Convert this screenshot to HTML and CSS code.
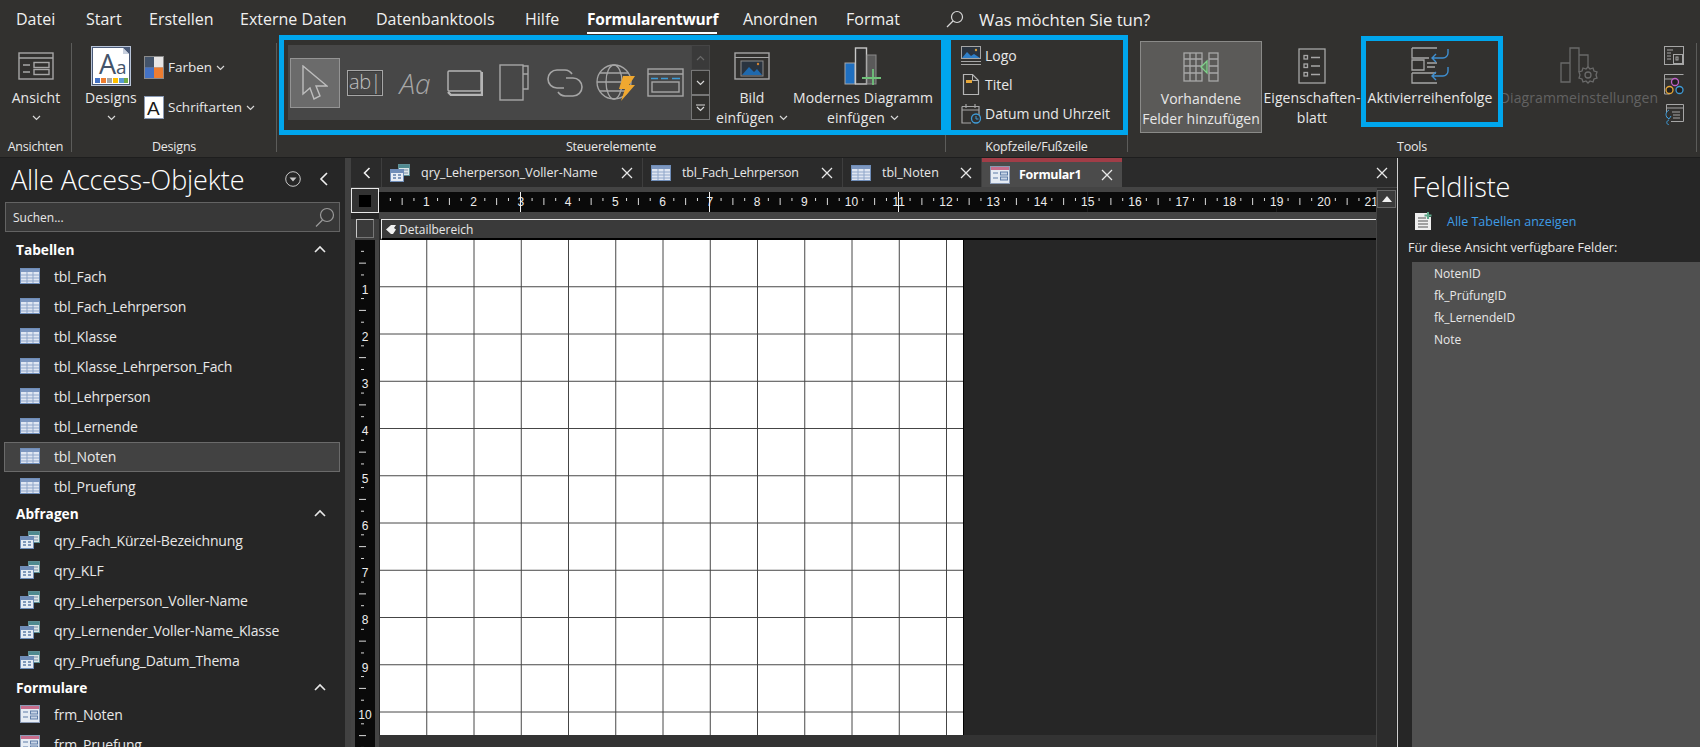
FILE: index.html
```html
<!DOCTYPE html>
<html lang="de">
  <head>
    <meta charset="utf-8" />
    <title>Formular1 - Formularentwurf</title>
    <link rel="stylesheet" href="styles.css">
  </head>
  <body>
    <svg class="sprite" aria-hidden="true">
      <symbol id="chev" viewBox="0 0 9 6"><path d="M1 1l3.500 3.500L8 1" fill="none" stroke="#d8d8d8" stroke-width="1.200"/></symbol>
      <symbol id="close" viewBox="0 0 12 12"><path d="M1 1l10 10M11 1L1 11" stroke="#e8e8e8" stroke-width="1.300"/></symbol>
      <symbol id="up" viewBox="0 0 12 8"><path d="M1 7l5-5 5 5" fill="none" stroke="#e8e8e8" stroke-width="1.600"/></symbol>
      <symbol id="tbl" viewBox="0 0 20 16">
        <rect x=".5" y=".5" width="19" height="15" fill="#dfe6f2" stroke="#6f8db8"/>
        <rect x="1" y="1" width="18" height="3" fill="#7d97c0"/>
        <path d="M1 7h18M1 10h18M1 13h18M7 4v11M13 4v11" stroke="#8fa6c9"/>
      </symbol>
      <symbol id="qry" viewBox="0 0 20 18">
        <rect x="8.500" y=".5" width="11" height="11" fill="#dbe6e8" stroke="#5f8f96"/>
        <rect x="9" y="1" width="10" height="3" fill="#4f8a90"/>
        <path d="M14 6h4M14 9h4" stroke="#7d8fa8"/>
        <rect x=".5" y="5.500" width="13" height="12" fill="#e6ecf4" stroke="#6f8db8"/>
        <rect x="1" y="6" width="12" height="3" fill="#6f8db8"/>
        <path d="M3 11h3M8 11h3M3 14h3M8 14h3" stroke="#5f7da8" stroke-width="1.400"/>
      </symbol>
      <symbol id="frm" viewBox="0 0 20 18">
        <rect x=".5" y=".5" width="19" height="17" fill="#e6ecf4" stroke="#8a9ab5"/>
        <rect x="1" y="1" width="18" height="3" fill="#c76d8c"/>
        <path d="M3 7h5M3 12h5" stroke="#5f7da8"/>
        <rect x="10.500" y="6" width="7" height="3" fill="#c8d4e6" stroke="#5f7da8"/>
        <rect x="10.500" y="11" width="7" height="3" fill="#c8d4e6" stroke="#5f7da8"/>
      </symbol>
    </svg>

    <header class="ribbon">
      <nav class="menu">
        <span>Datei</span>
        <span>Start</span>
        <span>Erstellen</span>
        <span>Externe Daten</span>
        <span>Datenbanktools</span>
        <span>Hilfe</span>
        <span class="menu-active">Formularentwurf</span>
        <span>Anordnen</span>
        <span>Format</span>
        <svg class="menu-search" width="18" height="18" viewBox="0 0 18 18"><circle cx="11" cy="7" r="5.500" fill="none" stroke="#d8d8d8" stroke-width="1.200"/><path d="M7 11l-6 6" stroke="#d8d8d8" stroke-width="1.200"/></svg>
        <span class="menu-ask">Was möchten Sie tun?</span>
      </nav>

      <div class="groups">
        <section class="group group-views">
          <div class="group-body">
            <div class="big big-fill">
              <div class="big-icon">
                <svg width="36" height="28" viewBox="0 0 36 28" fill="none" stroke="#a6a6a6" stroke-width="1.400"><rect x="1" y="1" width="34" height="26"/><path d="M1 6h34M5 13h7M5 20h7"/><rect x="16" y="10.500" width="15" height="5"/><rect x="16" y="17.500" width="15" height="5"/></svg>
              </div>
              <span>Ansicht</span>
              <svg class="chev-line" width="9" height="6"><use href="#chev"/></svg>
            </div>
          </div>
          <div class="group-label">Ansichten</div>
        </section>

        <section class="group group-designs">
          <div class="group-body">
            <div class="big big-designs">
              <div class="big-icon">
                <svg width="40" height="40" viewBox="0 0 40 40"><rect x=".5" y=".5" width="39" height="39" fill="#4a5a78" stroke="#b8c4d8"/><path d="M2 2h30l6 6v30H2z" fill="#fff"/><path d="M32 2v6h6z" fill="#c8d0de"/><text x="8" y="28" class="design-aa">A</text><text x="25" y="28" class="design-a">a</text><rect x="4" y="32" width="5" height="5" fill="#4472c4"/><rect x="10" y="32" width="5" height="5" fill="#ed7d31"/><rect x="16" y="32" width="5" height="5" fill="#a5a5a5"/><rect x="22" y="32" width="5" height="5" fill="#ffc000"/><rect x="28" y="32" width="5" height="5" fill="#5b9bd5"/><rect x="33" y="32" width="4" height="5" fill="#70ad47"/></svg>
              </div>
              <span>Designs</span>
              <svg class="chev-line" width="9" height="6"><use href="#chev"/></svg>
            </div>
            <div class="smalls">
              <div class="small small-design">
                <svg width="20" height="23" viewBox="0 0 20 23"><rect width="20" height="23" fill="#8a8a8a"/><rect x="1" y="1" width="9" height="10.500" fill="#44546a"/><rect x="10" y="1" width="9" height="10.500" fill="#e7e6e6"/><rect x="1" y="11.500" width="9" height="10.500" fill="#4472c4"/><rect x="10" y="11.500" width="9" height="10.500" fill="#ed7d31"/></svg>
                <span>Farben</span>
                <svg width="9" height="6"><use href="#chev"/></svg>
              </div>
              <div class="small small-design">
                <svg width="20" height="23" viewBox="0 0 20 23"><rect x=".5" y=".5" width="19" height="22" fill="#fff" stroke="#8a9ab5"/><text x="3" y="19" class="font-a">A</text></svg>
                <span>Schriftarten</span>
                <svg width="9" height="6"><use href="#chev"/></svg>
              </div>
            </div>
          </div>
          <div class="group-label">Designs</div>
        </section>

        <section class="group group-controls">
          <div class="group-body">
            <div class="gallery">
              <div class="tool tool-on">
                <svg width="26" height="35" viewBox="0 0 26 35" fill="none" stroke="#bdbdbd" stroke-width="1.400"><path d="M1 1v28l7-6 4 11 6-3-4-10h11z"/></svg>
              </div>
              <div class="tool tool-abl"><span class="abl">ab|</span></div>
              <div class="tool tool-aa"><span class="aa">Aa</span></div>
              <div class="tool tool-btn">
                <svg width="36" height="26" viewBox="0 0 36 26" fill="none" stroke="#b5b5b5" stroke-width="1.400"><rect x="1" y="1" width="33" height="20" rx="1"/><path d="M1 22l3 3h31V2" stroke-width="2.400"/></svg>
              </div>
              <div class="tool tool-tab">
                <svg width="30" height="37" viewBox="0 0 30 37" fill="none" stroke="#a6a6a6" stroke-width="1.400"><rect x="1" y="1" width="23" height="35"/><path d="M24 2h5v8h-5M24 10h5v15h-5"/></svg>
              </div>
              <div class="tool tool-link">
                <svg width="38" height="28" viewBox="0 0 38 28" fill="none" stroke="#a6a6a6" stroke-width="1.600"><path d="M18 19h-7a9 9 0 0 1 0-18h8a9 9 0 0 1 7 4"/><path d="M20 9h7a9 9 0 0 1 0 18h-8a9 9 0 0 1-7-4"/></svg>
              </div>
              <div class="tool tool-globe">
                <svg width="40" height="38" viewBox="0 0 40 38"><g fill="none" stroke="#a6a6a6" stroke-width="1.300"><circle cx="18" cy="18" r="17"/><ellipse cx="18" cy="18" rx="8" ry="17"/><path d="M1 18h34M4 9h28M4 27h28"/></g><path d="M27 12h12l-6 9h6L25 37l4-12h-6z" fill="#f0a830"/></svg>
              </div>
              <div class="tool tool-win">
                <svg width="37" height="29" viewBox="0 0 37 29" fill="none" stroke="#a6a6a6" stroke-width="1.400"><rect x="1" y="1" width="35" height="27"/><path d="M1 6h35"/><path d="M4 10.500h7M14 10.500h7M25 10.500h8" stroke="#3f9bd6"/><rect x="5" y="14" width="27" height="10"/></svg>
              </div>
            </div>
            <div class="scroller">
              <div class="scroll-btn scroll-off"><svg width="9" height="6" viewBox="0 0 9 6" fill="none" stroke="#6a6a6a" stroke-width="1.200"><path d="M1 5l3.500-3.500L8 5"/></svg></div>
              <div class="scroll-btn"><svg width="9" height="6"><use href="#chev"/></svg></div>
              <div class="scroll-btn scroll-more"><svg width="9" height="8" viewBox="0 0 9 8" fill="none" stroke="#d8d8d8" stroke-width="1.200"><path d="M0 1h9M1 3l3.500 3.500L8 3"/></svg></div>
            </div>
            <div class="big big-bild">
              <div class="big-icon">
                <svg width="36" height="28" viewBox="0 0 36 28"><rect x="1" y="1" width="34" height="26" fill="none" stroke="#a6a6a6" stroke-width="1.400"/><path d="M1 5.500h34" stroke="#a6a6a6" stroke-width="1.200"/><rect x="7" y="9" width="22" height="15" fill="#2a3440" stroke="#8a8a8a"/><path d="M8 23l7-8 5 5 3-3 5 6z" fill="#1f69ad"/><circle cx="24" cy="12" r="1.200" fill="#d08030"/></svg>
              </div>
              <span>Bild</span>
              <span class="with-chev">einfügen <svg width="9" height="6"><use href="#chev"/></svg></span>
            </div>
            <div class="big big-chart">
              <div class="big-icon">
                <svg width="38" height="38" viewBox="0 0 38 38"><rect x="1" y="16" width="10" height="21" fill="#1f6fc0" stroke="#a6a6a6"/><rect x="11.500" y="1" width="11" height="36" fill="#303030" stroke="#c8c8c8" stroke-width="1.400"/><rect x="23" y="8" width="9" height="29" fill="#5a5a5a" stroke="#8a8a8a"/><path d="M29 22v16M18 31h19" stroke="#6fc27a" stroke-width="1.800"/></svg>
              </div>
              <span>Modernes Diagramm</span>
              <span class="with-chev">einfügen <svg width="9" height="6"><use href="#chev"/></svg></span>
            </div>
          </div>
          <div class="group-label">Steuerelemente</div>
        </section>

        <section class="group group-header">
          <div class="group-body">
            <div class="smalls smalls-header">
              <div class="small">
                <svg width="20" height="20" viewBox="0 0 20 20"><rect x=".5" y=".5" width="19" height="12" fill="#2a3440" stroke="#a6a6a6"/><path d="M1 12l5-6 4 4 3-2 6 4z" fill="#2f7fc8"/><circle cx="15" cy="4" r="1.200" fill="#d8a040"/><path d="M0 15.500h20M0 18.500h20" stroke="#a6a6a6"/></svg>
                <span>Logo</span>
              </div>
              <div class="small">
                <svg width="20" height="21" viewBox="0 0 20 21"><path d="M2.500.5h9l6 6v14h-15z" fill="none" stroke="#b5b5b5" stroke-width="1.200"/><path d="M11.500.5v6h6" fill="none" stroke="#b5b5b5"/><rect x="5" y="6" width="6" height="3" fill="#e8a838"/></svg>
                <span>Titel</span>
              </div>
              <div class="small">
                <svg width="20" height="21" viewBox="0 0 20 21"><path d="M1 3.500h17V12M1 3.500v16.500h9M1 7h17M5 1v4M14 1v4" fill="none" stroke="#a6a6a6" stroke-width="1.200"/><circle cx="15" cy="15.500" r="4.500" fill="#303030" stroke="#3f9bd6" stroke-width="1.300"/><path d="M15 13v3h2.500" fill="none" stroke="#3f9bd6"/></svg>
                <span>Datum und Uhrzeit</span>
              </div>
            </div>
          </div>
          <div class="group-label">Kopfzeile/Fußzeile</div>
        </section>

        <section class="group group-tools">
          <div class="group-body">
            <div class="big big-fields">
              <div class="big-icon">
                <svg width="36" height="30" viewBox="0 0 36 30" fill="none" stroke="#a8a8a8" stroke-width="1.300"><rect x="1" y="1" width="18" height="28"/><path d="M1 7h18M1 14h18M1 21h18M7 1v28M13 1v28"/><rect x="26" y="1" width="9" height="28"/><path d="M26 7h9M26 14h9M26 21h9"/><path d="M24 9l-6 6 6 6z" fill="#5f7a5f" stroke="#7fd08a"/></svg>
              </div>
              <span>Vorhandene</span>
              <span>Felder hinzufügen</span>
            </div>
            <div class="big big-sheet">
              <div class="big-icon">
                <svg width="28" height="36" viewBox="0 0 28 36" fill="none" stroke="#a6a6a6" stroke-width="1.300"><rect x="1" y="1" width="26" height="34"/><rect x="6" y="7.500" width="3.500" height="3.500"/><rect x="6" y="16" width="3.500" height="3.500"/><rect x="6" y="24.500" width="3.500" height="3.500"/><path d="M13 9.500h9M13 18h9M13 26.500h9"/></svg>
              </div>
              <span>Eigenschaften-</span>
              <span>blatt</span>
            </div>
            <div class="big big-order">
              <div class="big-icon">
                <svg width="38" height="37" viewBox="0 0 38 37" fill="none" stroke="#a6a6a6" stroke-width="1.300"><path d="M1 1h25M1 1v10h17M1 13h12v10H1zM16 16h10M16 20h8M1 26h24M1 26v10h25"/><g stroke="#3f8fd0" stroke-width="1.400"><path d="M37 2v4a5 5 0 0 1-5 5H21M25 7l-4 4 4 4"/><path d="M37 20v4a5 5 0 0 1-5 5H21M25 25l-4 4 4 4"/></g></svg>
              </div>
              <span>Aktivierreihenfolge</span>
            </div>
            <div class="big big-chartset">
              <div class="big-icon">
                <svg width="38" height="38" viewBox="0 0 38 38" fill="none" stroke="#6a6a6a" stroke-width="1.300"><path d="M1 16h9v19H1zM10 35V1h9v24M19 8h9v12"/><circle cx="28" cy="28" r="3"/><path d="M28 20l2 2 3-1 1 3 3 1-1 3 1 3-3 1-1 3-3-1-2 2-2-2-3 1-1-3-3-1 1-3-1-3 3-1 1-3 3 1z"/></svg>
              </div>
              <span class="dim">Diagrammeinstellungen</span>
            </div>
            <div class="mini-col">
              <svg width="20" height="19" viewBox="0 0 20 19" fill="none" stroke="#a6a6a6"><rect x=".5" y=".5" width="19" height="18"/><path d="M3 4h6M3 7h4M3 10h4M3 13h4"/><rect x="9.500" y="8.500" width="9" height="9"/><rect x="12" y="11" width="2" height="3"/></svg>
              <svg width="20" height="21" viewBox="0 0 20 21" fill="none"><path d="M.5 20V.5h19" stroke="#a6a6a6"/><path d="M.5 20h5" stroke="#a6a6a6"/><path d="M.5 5h11" stroke="#a6a6a6"/><circle cx="11" cy="8" r="3.500" fill="#202020" stroke="#c060c8" stroke-width="1.300"/><circle cx="5.500" cy="16" r="3.500" fill="#202020" stroke="#e8a838" stroke-width="1.300"/><circle cx="15.500" cy="16" r="3.500" fill="#202020" stroke="#3f9bd6" stroke-width="1.300"/></svg>
              <svg width="20" height="21" viewBox="0 0 20 21" fill="none" stroke="#a6a6a6"><path d="M2.500 9V.5h17v17H7M2.500 4h17M8 8h8M9 11h7M9 14h7"/><path d="M5 6C1 8 1 13 5 15M5 21c-3-1-3-4 0-5M2 12l3 3 2-3" stroke="#3f9bd6"/></svg>
            </div>
          </div>
          <div class="group-label">Tools</div>
        </section>
      </div>

      <div class="mark mark-controls"></div>
      <div class="mark mark-header"></div>
      <div class="mark mark-order"></div>
    </header>

    <main class="main">
      <aside class="nav">
        <div class="nav-title">
          <h1>Alle Access-Objekte</h1>
          <svg width="16" height="16" viewBox="0 0 16 16" fill="none"><circle cx="8" cy="8" r="7.300" stroke="#c8c8c8"/><path d="M4.500 6.500h7L8 10.500z" fill="#c8c8c8"/></svg>
          <svg class="nav-back" width="9" height="14" viewBox="0 0 9 14" fill="none"><path d="M8 1L2 7l6 6" stroke="#f0f0f0" stroke-width="1.600"/></svg>
        </div>
        <div class="search">
          <span>Suchen...</span>
          <svg width="20" height="20" viewBox="0 0 20 20" fill="none" stroke="#9a9a9a" stroke-width="1.200"><circle cx="12" cy="8" r="6.500"/><path d="M7.500 13L1 19.500"/></svg>
        </div>

        <div class="section"><span>Tabellen</span><svg width="12" height="8"><use href="#up"/></svg></div>
        <div class="item"><svg width="20" height="16"><use href="#tbl"/></svg>tbl_Fach</div>
        <div class="item"><svg width="20" height="16"><use href="#tbl"/></svg>tbl_Fach_Lehrperson</div>
        <div class="item"><svg width="20" height="16"><use href="#tbl"/></svg>tbl_Klasse</div>
        <div class="item"><svg width="20" height="16"><use href="#tbl"/></svg>tbl_Klasse_Lehrperson_Fach</div>
        <div class="item"><svg width="20" height="16"><use href="#tbl"/></svg>tbl_Lehrperson</div>
        <div class="item"><svg width="20" height="16"><use href="#tbl"/></svg>tbl_Lernende</div>
        <div class="item item-on"><svg width="20" height="16"><use href="#tbl"/></svg>tbl_Noten</div>
        <div class="item"><svg width="20" height="16"><use href="#tbl"/></svg>tbl_Pruefung</div>

        <div class="section"><span>Abfragen</span><svg width="12" height="8"><use href="#up"/></svg></div>
        <div class="item"><svg width="20" height="18"><use href="#qry"/></svg>qry_Fach_Kürzel-Bezeichnung</div>
        <div class="item"><svg width="20" height="18"><use href="#qry"/></svg>qry_KLF</div>
        <div class="item"><svg width="20" height="18"><use href="#qry"/></svg>qry_Leherperson_Voller-Name</div>
        <div class="item"><svg width="20" height="18"><use href="#qry"/></svg>qry_Lernender_Voller-Name_Klasse</div>
        <div class="item"><svg width="20" height="18"><use href="#qry"/></svg>qry_Pruefung_Datum_Thema</div>

        <div class="section"><span>Formulare</span><svg width="12" height="8"><use href="#up"/></svg></div>
        <div class="item"><svg width="20" height="18"><use href="#frm"/></svg>frm_Noten</div>
        <div class="item"><svg width="20" height="18"><use href="#frm"/></svg>frm_Pruefung</div>
      </aside>

      <div class="splitter"></div>

      <div class="center">
        <div class="tabs">
          <div class="tabs-back"><svg width="9" height="14" viewBox="0 0 9 14" fill="none"><path d="M7.500 2L2.500 7l5 5" stroke="#f0f0f0" stroke-width="1.600"/></svg></div>
          <div class="tab tab-qry"><svg width="20" height="18"><use href="#qry"/></svg><span>qry_Leherperson_Voller-Name</span><svg class="tab-x" width="12" height="12"><use href="#close"/></svg></div>
          <div class="tab tab-fach"><svg width="20" height="16"><use href="#tbl"/></svg><span>tbl_Fach_Lehrperson</span><svg class="tab-x" width="12" height="12"><use href="#close"/></svg></div>
          <div class="tab tab-noten"><svg width="20" height="16"><use href="#tbl"/></svg><span>tbl_Noten</span><svg class="tab-x" width="12" height="12"><use href="#close"/></svg></div>
          <div class="tab tab-form"><svg width="20" height="18"><use href="#frm"/></svg><span>Formular1</span><svg class="tab-x" width="12" height="12"><use href="#close"/></svg></div>
          <svg class="tabs-close" width="12" height="12"><use href="#close"/></svg>
        </div>

        <div class="designer">
          <div class="canvas">
            <div class="corner-top"><div class="corner-dot"></div></div>
            <div class="hruler">
              <span>1</span><span>2</span><span>3</span><span>4</span><span>5</span><span>6</span><span>7</span>
              <span>8</span><span>9</span><span>10</span><span>11</span><span>12</span><span>13</span><span>14</span>
              <span>15</span><span>16</span><span>17</span><span>18</span><span>19</span><span>20</span><span>21</span>
              <i class="guide guide-a"></i>
              <i class="guide guide-b"></i>
              <i class="guide guide-c"></i>
              <i class="guide guide-d"></i>
              <i class="guide guide-e"></i>
            </div>
            <div class="corner-side"><div class="corner-box"></div></div>
            <div class="band">
              <svg width="10" height="9" viewBox="0 0 10 9"><path d="M0 4.500L5 0h5L8 3l2 1.500L7 9H5z" fill="#f0f0f0"/></svg>
              <span>Detailbereich</span>
            </div>
            <div class="vruler">
              <span>1</span><span>2</span><span>3</span><span>4</span><span>5</span>
              <span>6</span><span>7</span><span>8</span><span>9</span><span>10</span>
            </div>
            <div class="sheet">
              <div class="form-grid"></div>
            </div>
          </div>
          <div class="vscroll">
            <div class="vscroll-up"><svg width="10" height="6" viewBox="0 0 10 6"><path d="M5 0l5 6H0z" fill="#f0f0f0"/></svg></div>
          </div>
        </div>
      </div>

      <aside class="fields">
        <h2>Feldliste</h2>
        <div class="fields-link">
          <svg width="18" height="19" viewBox="0 0 18 19"><path d="M1 1h12v4h4v13H1z" fill="#eeeeee"/><path d="M4 6h8M4 9h10M4 12h10M4 15h10" stroke="#555"/><path d="M14 0v7M10.500 3.500h7" stroke="#5fa88a" stroke-width="2"/></svg>
          <span>Alle Tabellen anzeigen</span>
        </div>
        <div class="fields-caption">Für diese Ansicht verfügbare Felder:</div>
        <ul class="fields-list">
          <li>NotenID</li>
          <li>fk_PrüfungID</li>
          <li>fk_LernendeID</li>
          <li>Note</li>
        </ul>
      </aside>
    </main>
  </body>
</html>
```

FILE: styles.css
```css
body {
  margin: 0;
  width: 1700px;
  height: 747px;
  overflow: hidden;
  background: #262626;
  color: #e8e8e8;
  font-family: "Open Sans", "Noto Sans", sans-serif;
  font-size: 13px;
}
.sprite {
  position: absolute;
  width: 0;
  height: 0;
}
svg {
  display: block;
  flex: none;
}

/* ribbon */
.ribbon {
  position: relative;
  height: 158px;
  background: #32312f;
  box-shadow: inset 0 -1px 0 #1e1e1e;
}
.menu {
  display: grid;
  grid-template-columns: 70px 63px 91px 136px 149px 62px 156px 103px 100px 33px auto;
  align-items: center;
  box-sizing: border-box;
  height: 34px;
  padding: 4px 0 0 16px;
  font-size: 16px;
  color: #f0f0f0;
}
.menu-active {
  position: relative;
  display: flex;
  align-items: center;
  align-self: stretch;
  font-size: 15.500px;
  font-weight: 700;
  letter-spacing: -0.2px;
  color: #fff;
}
.menu-active::after {
  content: "";
  position: absolute;
  left: 0;
  bottom: 0;
  width: 130px;
  height: 2px;
  background: #fff;
}
.menu-ask {
  font-size: 16.700px;
}
.groups {
  display: flex;
  height: 124px;
}
.group {
  display: flex;
  flex-direction: column;
  height: 109px;
  margin-top: 9px;
  border-right: 1px solid #5c5c5a;
  box-sizing: border-box;
}
.group-views { width: 72px; }
.group-designs { width: 205px; }
.group-controls { width: 669px; }
.group-header { width: 182px; }
.group-tools { width: 569px; }
.group-body {
  display: flex;
  flex: none;
  height: 95px;
}
.group-label {
  flex: none;
  height: 18px;
  line-height: 18px;
  text-align: center;
  font-size: 12.500px;
  letter-spacing: -0.2px;
  white-space: nowrap;
}

.big {
  display: flex;
  flex-direction: column;
  align-items: center;
  flex: none;
  font-size: 14px;
  line-height: 20px;
  white-space: nowrap;
  letter-spacing: 0.1px;
}
.big-icon {
  display: flex;
  align-items: center;
  height: 45px;
}
.chev-line {
  margin-top: 7px;
}
.with-chev {
  display: flex;
  align-items: center;
  gap: 5px;
}
.big-fill { width: 72px; }
.big-designs { width: 66px; margin-left: 6px; }
.big-bild { width: 80px; margin-left: 2px; }
.big-chart { width: 142px; }
.big-fields {
  width: 120px;
  margin: -2px 0 0 12px;
  padding-top: 2px;
  height: 88px;
  letter-spacing: 0;
  background: #5b5a58;
  border: 1px solid #8a8a88;
}
.big-sheet { width: 100px; }
.big-order { width: 136px; }
.big-chartset { width: 162px; }
.dim { color: #626262; }
.mini-col {
  display: flex;
  flex-direction: column;
  gap: 9px;
  margin: 3px 0 0 4px;
}

.smalls {
  display: flex;
  flex-direction: column;
  margin-top: 13px;
  gap: 17px;
  line-height: 23px;
}
.small {
  display: flex;
  align-items: center;
  gap: 4px;
  height: 23px;
  font-size: 14px;
  white-space: nowrap;
}
.small-design {
  font-size: 13.500px;
}
.smalls-header {
  margin: 1px 0 0 15px;
  gap: 6px;
}

.gallery {
  display: flex;
  align-items: center;
  width: 403px;
  height: 75px;
  margin: 2px 0 0 11px;
  background: #474747;
  color: #a6a6a6;
}
.tool {
  display: flex;
  align-items: center;
  justify-content: center;
  flex: none;
}
.tool-on {
  width: 48px;
  height: 48px;
  margin-left: 2px;
  background: #6b6b6b;
  border: 1px solid #949494;
}
.tool-abl { margin-left: 7px; }
.tool-aa { width: 36px; margin-left: 14px; }
.tool-btn { margin-left: 14px; }
.tool-tab { margin-left: 16px; }
.tool-link { margin-left: 17px; }
.tool-globe { margin-left: 12px; }
.tool-win { margin-left: 11px; }
.abl {
  display: block;
  width: 34px;
  height: 24px;
  line-height: 22px;
  border: 1px solid #a6a6a6;
  box-shadow: inset 0 0 0 1px #3a3a3a;
  text-align: center;
  font-size: 20px;
  letter-spacing: -0.5px;
  font-weight: 300;
  color: #c0c0c0;
}
.aa {
  font-weight: 300;
  font-style: italic;
  font-size: 28px;
}
.design-aa {
  font-family: "Open Sans", sans-serif;
  font-size: 27px;
  fill: #44546a;
}
.design-a {
  font-family: "Open Sans", sans-serif;
  font-size: 19px;
  fill: #44546a;
}
.font-a {
  font-family: "Liberation Sans", sans-serif;
  font-size: 19px;
  fill: #1a1a1a;
}
.scroller {
  display: flex;
  flex-direction: column;
  width: 19px;
  margin-top: 2px;
}
.scroll-btn {
  display: flex;
  align-items: center;
  justify-content: center;
  height: 25px;
  box-sizing: border-box;
  border: 1px solid #777;
}
.scroll-off {
  border-color: #454545;
  background: #3a3a3a;
}
.mark {
  position: absolute;
  box-sizing: border-box;
  border: 5px solid #00a6ed;
}
.mark-controls { left: 279px; top: 35px; width: 667px; height: 100px; }
.mark-header { left: 946px; top: 35px; width: 182px; height: 100px; }
.mark-order { left: 1361px; top: 36px; width: 142px; height: 91px; }

/* main */
.main {
  display: flex;
  height: 589px;
  overflow: hidden;
}
.nav {
  width: 345px;
  flex: none;
  background: #262626;
}
.nav-title {
  display: flex;
  align-items: center;
  box-sizing: border-box;
  height: 44px;
  padding: 0 0 2px 11px;
}
.nav-title h1 {
  width: 274px;
  margin: 0;
  font-size: 27px;
  font-weight: 300;
  color: #fff;
  letter-spacing: -0.1px;
  white-space: nowrap;
}
.nav-back {
  margin-left: 18px;
}
.search {
  display: flex;
  align-items: center;
  justify-content: space-between;
  width: 335px;
  height: 30px;
  margin-left: 5px;
  padding: 0 4px 0 7px;
  box-sizing: border-box;
  background: #383838;
  border: 1px solid #636363;
  font-size: 12px;
}
.section {
  display: flex;
  align-items: center;
  justify-content: space-between;
  box-sizing: border-box;
  height: 24px;
  padding: 0 19px 2px 16px;
  font-size: 13.700px;
  font-weight: 700;
  color: #fff;
}
.search + .section {
  margin-top: 6px;
}
.item {
  display: flex;
  align-items: center;
  gap: 14px;
  box-sizing: border-box;
  width: 336px;
  height: 30px;
  margin-left: 4px;
  padding: 0 0 2px 15px;
  border: 1px solid transparent;
  font-size: 14px;
  letter-spacing: -0.15px;
}
.item-on {
  background: #424242;
  border-color: #6a6a6a;
}
.splitter {
  width: 6px;
  flex: none;
  background: #414141;
}
.center {
  display: flex;
  flex-direction: column;
  width: 1046px;
  flex: none;
  border-right: 1px solid #cfcfcf;
}

.tabs {
  display: flex;
  align-items: stretch;
  height: 30px;
  flex: none;
  background: #2b2b2b;
  border-bottom: 1px solid #444;
  box-sizing: border-box;
  font-size: 12.500px;
  position: relative;
}
.tabs-back {
  display: flex;
  align-items: center;
  justify-content: center;
  width: 31px;
  border-right: 1px solid #3e3e3e;
  box-sizing: border-box;
}
.tab {
  display: flex;
  align-items: center;
  gap: 11px;
  box-sizing: border-box;
  padding: 0 9px 0 8px;
  border-right: 1px solid #3e3e3e;
  white-space: nowrap;
}
.tab-x {
  margin-left: auto;
}
.tab-qry { width: 261px; }
.tab-fach { width: 200px; letter-spacing: -0.2px; }
.tab-noten { width: 139px; }
.tab-form {
  width: 140px;
  gap: 9px;
  background: #4b4b4b;
  border-top: 4px solid #a13d47;
  border-right: 0;
  font-weight: 700;
  letter-spacing: -0.3px;
  color: #fff;
}
.tabs-close {
  position: absolute;
  right: 9px;
  top: 9px;
}

.designer {
  display: flex;
  flex: 1;
  min-height: 0;
}
.canvas {
  display: grid;
  grid-template-columns: 28px 997px;
  grid-template-rows: 31px 21px 1fr;
  flex: none;
}
.corner-top {
  display: flex;
  align-items: center;
  justify-content: center;
  width: 28px;
  height: 25px;
  box-sizing: border-box;
  background: #333;
  border: 1px solid #e8e8e8;
}
.corner-dot {
  width: 12px;
  height: 12px;
  background: #000;
}
.hruler {
  position: relative;
  display: flex;
  box-sizing: border-box;
  height: 31px;
  padding-left: 23.625px;
  border-top: 4px solid #444;
  border-bottom: 7px solid #444;
  background-color: #0a0a0a;
  background-image:
    linear-gradient(to right, transparent 11.300px, #ddd 11.300px, #ddd 12.300px, transparent 12.300px, transparent 34.900px, #ddd 34.900px, #ddd 35.900px, transparent 35.900px),
    linear-gradient(to right, transparent 23.100px, #ddd 23.100px, #ddd 24.100px, transparent 24.100px);
  background-size: 47.250px 3px, 47.250px 7px;
  background-position: 0 6px, 0 6px;
  background-repeat: repeat-x;
  overflow: hidden;
  font-family: "Liberation Sans", sans-serif;
  font-size: 12px;
  line-height: 20px;
  color: #eee;
}
.hruler span {
  flex: none;
  width: 47.250px;
  text-align: center;
}
.guide {
  position: absolute;
  top: -4px;
  bottom: -7px;
  width: 1px;
  background: #f0f0f0;
}
.guide-a { left: 141px; }
.guide-b { left: 330px; }
.guide-c { left: 519px; }
.guide-d { left: 708px; background: #1a1a1a; }
.guide-e { left: 897px; background: #1a1a1a; }
.corner-side {
  background: #3d3d3d;
  padding-left: 5px;
}
.corner-box {
  width: 18px;
  height: 19px;
  box-sizing: border-box;
  background: #3a3a3a;
  border: 1px solid #c8c8c8;
  border-right-color: #777;
  border-bottom-color: #777;
}
.band {
  display: flex;
  align-items: center;
  gap: 3px;
  box-sizing: border-box;
  height: 21px;
  margin-left: 2px;
  padding: 0 0 0 4px;
  background: #3a3a3a;
  border-top: 1px solid #e8e8e8;
  border-left: 1px solid #e8e8e8;
  border-bottom: 2px solid #000;
  font-size: 12px;
}
.vruler {
  display: flex;
  flex-direction: column;
  box-sizing: border-box;
  width: 28px;
  height: 507px;
  padding-top: 26px;
  border-left: 4px solid #444;
  border-right: 4px solid #444;
  background-color: #0a0a0a;
  background-image:
    linear-gradient(to bottom, transparent 11.300px, #ddd 11.300px, #ddd 12.300px, transparent 12.300px, transparent 34.900px, #ddd 34.900px, #ddd 35.900px, transparent 35.900px),
    linear-gradient(to bottom, transparent 23.100px, #ddd 23.100px, #ddd 24.100px, transparent 24.100px);
  background-size: 3px 47.250px, 7px 47.250px;
  background-position: 6px 0, 4px 0;
  background-repeat: repeat-y;
  font-family: "Liberation Sans", sans-serif;
  font-size: 12px;
  color: #eee;
}
.vruler span {
  display: flex;
  align-items: center;
  justify-content: center;
  height: 47.250px;
  flex: none;
}
.sheet {
  background: #262626;
  height: 507px;
  box-shadow: inset 0 -12px 0 #333;
}
.form-grid {
  width: 583px;
  height: 495px;
  margin-left: 1px;
  background-color: #fff;
  background-image:
    linear-gradient(to right, transparent 46.250px, #444 46.250px),
    linear-gradient(to bottom, transparent 46.250px, #444 46.250px);
  background-size: 47.250px 47.250px;
  box-shadow: 1px 0 0 #000;
}
.vscroll {
  width: 20px;
  flex: none;
  padding-top: 2px;
  background: #2c2c2c;
  border-left: 1px solid #444;
  box-sizing: border-box;
}
.vscroll-up {
  display: flex;
  align-items: center;
  justify-content: center;
  height: 18px;
  background: #3a3a3a;
  border: 1px solid #666;
  box-sizing: border-box;
}

/* field list */
.fields {
  flex: 1;
  background: #262626;
}
.fields h2 {
  height: 46px;
  margin: 0;
  padding: 7px 0 0 14px;
  box-sizing: border-box;
  font-size: 27px;
  font-weight: 300;
  line-height: 44px;
  color: #fff;
  letter-spacing: -0.1px;
}
.fields-link {
  display: flex;
  align-items: center;
  gap: 15px;
  height: 28px;
  margin-top: 3px;
  padding-left: 16px;
  font-size: 12.500px;
  color: #3e9ce6;
}
.fields-caption {
  height: 27px;
  line-height: 26px;
  padding-left: 10px;
  font-size: 12.500px;
}
.fields-list {
  height: 486px;
  margin: 0 0 0 14px;
  padding: 1px 0 0 22px;
  box-sizing: border-box;
  list-style: none;
  background: #505050;
  font-size: 12px;
  line-height: 22px;
}
```
